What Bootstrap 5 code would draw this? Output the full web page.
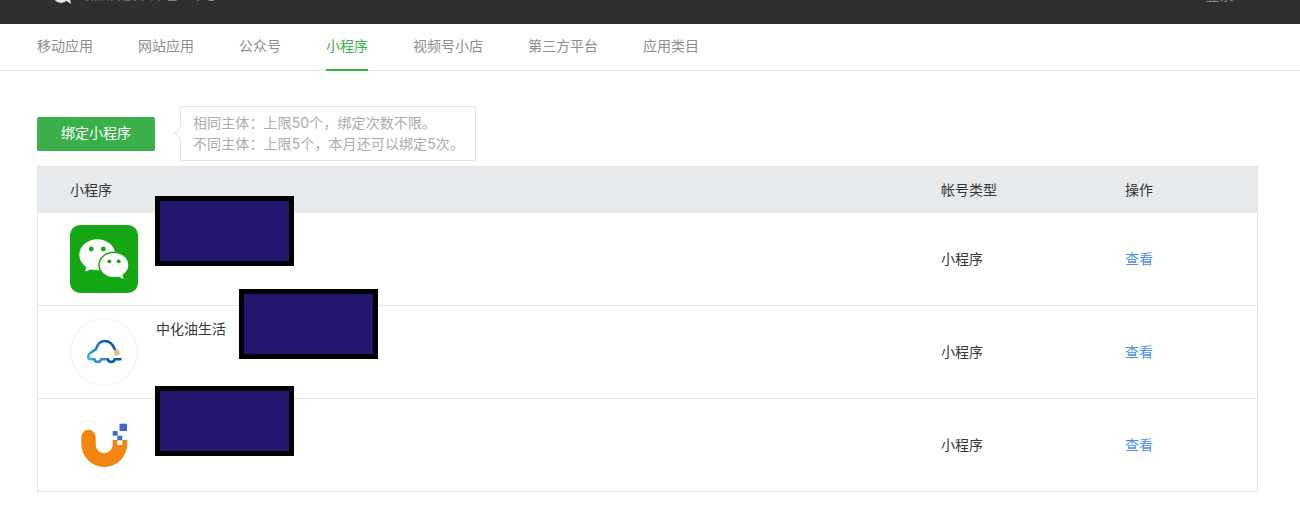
<!DOCTYPE html>
<html lang="zh">
<head>
<meta charset="utf-8">
<title>小程序</title>
<link href="https://cdn.jsdelivr.net/npm/bootstrap@5.3.0/dist/css/bootstrap.min.css" rel="stylesheet">
<style>
html,body{height:527px;overflow:hidden}
body{font-family:"Liberation Sans","Noto Sans CJK SC",sans-serif;font-size:14px;color:#353535;background:#fff}
.topbar{height:24px;background:#2f2f2f;overflow:hidden;padding:0 58px 0 52px}
.topbar-in{margin-top:-16px;color:#8a8a8a;font-size:13px;line-height:20px;height:20px}
.top-logo{margin-top:-1px;flex:none}
.top-title{margin-left:12px;white-space:nowrap;position:relative;top:1px}
.top-user{font-size:14px;white-space:nowrap;position:relative;top:1px}
.tabbar{height:47px;border-bottom:1px solid #e4e4ea;padding-left:37px;gap:45px}
.tabbar a{display:block;height:47px;line-height:44px;color:#8d8d8d;text-decoration:none}
.tabbar a.on{color:#3bb04a;border-bottom:2px solid #3bb04a}
.main-zone{padding:35px 42px 0 37px}
.bind-btn{width:118px;height:34px;background:#3bb04a;border:0;border-radius:2px;color:#fff;font-size:14px;padding:0}
.bind-btn:hover{background:#3bb04a;color:#fff}
.tip-box{position:relative;margin-left:25px;width:296px;height:55px;border:1px solid #e4e4ea;padding:5px 12px;color:#ababab;line-height:21px;letter-spacing:.1px;white-space:nowrap;font-family:"Inter","Noto Sans CJK SC",sans-serif}
.tip-box::before{content:"";position:absolute;left:-5px;top:22px;width:8px;height:8px;background:#fff;border-left:1px solid #e4e4ea;border-bottom:1px solid #e4e4ea;transform:rotate(45deg)}
.app-table{margin-top:5px;border:1px solid #e4e4e4;border-bottom:0;width:1221px}
.head-row{height:46px;background:#e7eaed;color:#353535}
.app-row{height:93px;border-bottom:1px solid #e4e4e4;position:relative}
.cell-name{width:903px;padding-left:32px}
.cell-kind{width:184px}
.app-ico{width:68px;height:68px;flex:none;border-radius:10px;display:block}
.ico-ring{border:1px solid #ededed;border-radius:50%}
.app-title{margin-left:18px;align-self:flex-start;padding-top:1px;line-height:20px;white-space:nowrap}
.redact{position:absolute;width:139px;height:70px;background:#27166f;border:5px solid #000}
.redact-a{left:117px;top:-17px}
.redact-b{left:201px;top:-17px}
.redact-c{left:117px;top:-13px}
.view-link{color:#4d90e6;text-decoration:none}
</style>
</head>
<body>
<div class="topbar">
  <div class="topbar-in d-flex justify-content-between align-items-center">
    <div class="d-flex align-items-center">
      <svg class="top-logo" width="20" height="20" viewBox="0 0 20 20"><ellipse cx="9" cy="9" rx="9" ry="10" fill="#e6e6e6"/><path d="M13 16l6 4 -1-6z" fill="#e6e6e6"/></svg>
      <span class="top-title">微信开放平台 管理中心</span>
    </div>
    <span class="top-user">· 登录 ·</span>
  </div>
</div>
<nav class="tabbar d-flex">
  <a href="#">移动应用</a>
  <a href="#">网站应用</a>
  <a href="#">公众号</a>
  <a href="#" class="on">小程序</a>
  <a href="#">视频号小店</a>
  <a href="#">第三方平台</a>
  <a href="#">应用类目</a>
</nav>
<div class="main-zone">
  <div class="d-flex align-items-center">
    <button type="button" class="btn bind-btn">绑定小程序</button>
    <div class="tip-box">相同主体：上限50个，绑定次数不限。<br>不同主体：上限5个，本月还可以绑定5次。</div>
  </div>
  <div class="app-table">
    <div class="head-row d-flex align-items-center">
      <div class="cell-name">小程序</div>
      <div class="cell-kind">帐号类型</div>
      <div>操作</div>
    </div>
    <div class="app-row d-flex align-items-center">
      <div class="cell-name d-flex align-items-center">
        <svg class="app-ico" viewBox="0 0 68 68"><rect width="68" height="68" rx="8" fill="#15a713"/>
          <ellipse cx="27.300" cy="29.800" rx="18" ry="15.500" fill="#fff"/>
          <path d="M17 40L15 46.500 25 43z" fill="#fff"/>
          <circle cx="21.300" cy="24" r="2.400" fill="#15a713"/><circle cx="33.300" cy="24" r="2.400" fill="#15a713"/>
          <ellipse cx="44" cy="40" rx="15" ry="12.800" fill="#fff" stroke="#15a713" stroke-width="1.500"/>
          <path d="M47 51L53.500 54 52 47z" fill="#fff"/>
          <circle cx="39.300" cy="36.300" r="1.900" fill="#15a713"/><circle cx="48.700" cy="36.300" r="1.900" fill="#15a713"/>
        </svg>
      </div>
      <div class="cell-kind">小程序</div>
      <a class="view-link" href="#">查看</a>
      <div class="redact redact-a"></div>
    </div>
    <div class="app-row d-flex align-items-center">
      <div class="cell-name d-flex align-items-center">
        <svg class="app-ico ico-ring" viewBox="0 0 68 68">
          <defs><linearGradient id="carline" gradientUnits="userSpaceOnUse" x1="18" y1="42" x2="36" y2="24"><stop offset="0" stop-color="#3ab6ec"/><stop offset="1" stop-color="#0a5cb0"/></linearGradient></defs>
          <path d="M45 31C43 26 39 22.700 35 22.700 31 22.700 27.500 25.500 25.700 31L20 35C17 37 17 41 20 41.500H24" fill="none" stroke="url(#carline)" stroke-width="2.700" stroke-linecap="round" stroke-linejoin="round"/>
          <path d="M24 41.500C25 45 30 45 31 41.500H38" fill="none" stroke="#2f8fd8" stroke-width="2.700" stroke-linecap="round"/>
          <path d="M38 41.500C39 45 44 45 45 41.500H51" fill="none" stroke="#0a5cb0" stroke-width="2.700" stroke-linecap="round"/>
          <path d="M47.300 30.500c1.700 1.800 2.800 3.200 2.800 4.600a2.800 2.800 0 0 1-5.600 0c0-1.400 1.100-2.800 2.800-4.600z" fill="#efb57a"/>
        </svg>
        <span class="app-title">中化油生活</span>
      </div>
      <div class="cell-kind">小程序</div>
      <a class="view-link" href="#">查看</a>
      <div class="redact redact-b"></div>
    </div>
    <div class="app-row d-flex align-items-center">
      <div class="cell-name d-flex align-items-center">
        <svg class="app-ico" viewBox="0 0 68 68">
          <path d="M11.300 26a7.200 7.200 0 0 1 14.400 0V33.800a8.500 8.500 0 0 0 17 0V29H57.300V33a23 23 0 0 1-46 0z" fill="#f0860f"/>
          <rect x="49.500" y="12.700" width="7.500" height="7.300" fill="#3f6cc4"/>
          <rect x="42.700" y="20" width="5" height="4.700" fill="#3f6cc4"/>
          <rect x="47.300" y="24.700" width="5" height="4.600" fill="#3f6cc4"/>
          <rect x="47.300" y="29.300" width="5" height="4.700" fill="#fff"/>
        </svg>
      </div>
      <div class="cell-kind">小程序</div>
      <a class="view-link" href="#">查看</a>
      <div class="redact redact-c"></div>
    </div>
  </div>
</div>
</body>
</html>
